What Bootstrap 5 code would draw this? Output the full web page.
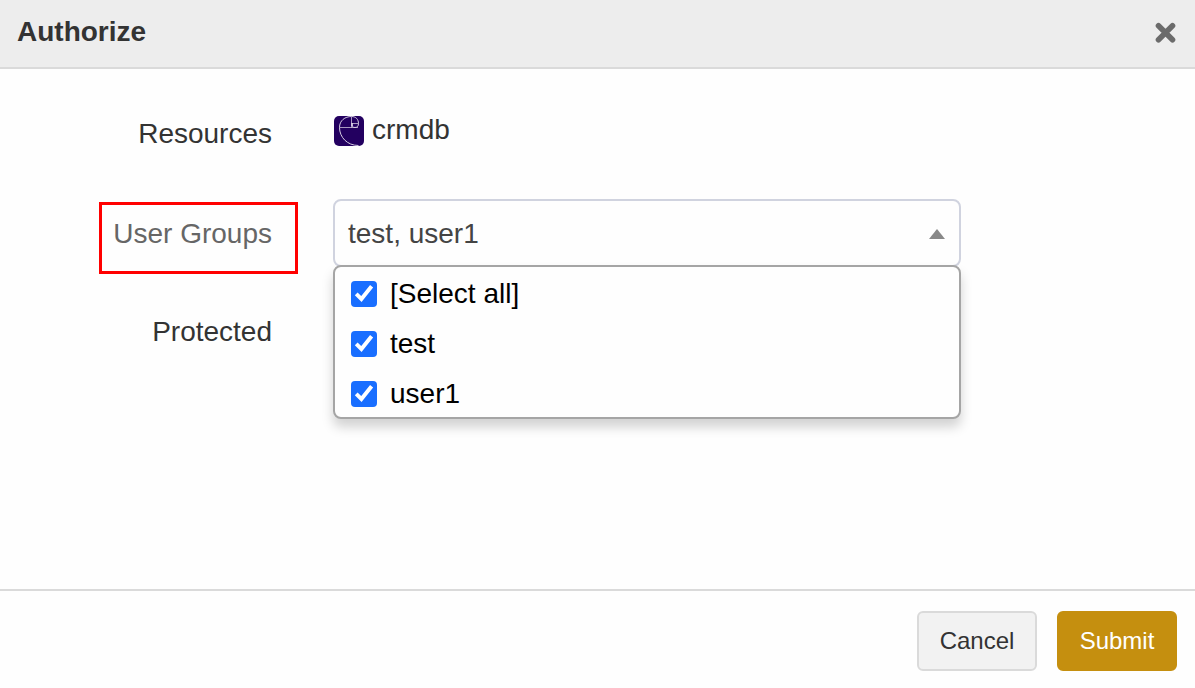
<!DOCTYPE html>
<html lang="en">
<head>
<meta charset="utf-8">
<meta name="viewport" content="width=device-width, initial-scale=1">
<title>Authorize</title>
<link href="https://cdn.jsdelivr.net/npm/bootstrap@5.3.0/dist/css/bootstrap.min.css" rel="stylesheet">
<style>
body{font-family:"Liberation Sans",Arial,sans-serif;font-size:28px;line-height:32px;color:#333;background:#fefefe;overflow:hidden}
.dialog-box{height:688px}
.dialog-box .modal-header{height:69px;background:#ededed;border-bottom:2px solid #dadada;border-radius:0;padding:0 19px 3px 17px}
.dialog-box .modal-title{font-size:28px;line-height:32px;font-weight:700}
.close-x{width:22px;height:22px;padding:0;border:0;background:none;line-height:0;margin-top:1px}
.form-area{padding-top:45px}
.field-label{width:272px;text-align:right}
.field-control{width:628px;margin-left:61px}
.row-resources{height:85px}
.resource-icon{margin:2px 8px 0 1px}
.row-groups{height:101px}
.outlined{width:199px;height:72px;margin:3px 0 0 99px;border:3px solid #f00;padding:13px 23px 0 0;color:#666;text-align:right;white-space:nowrap}
.picker{margin-left:35px}
.picker-box{height:68px;border:2px solid #d0d3df;border-radius:8px;padding:2px 14px 0 13px;color:#444;background:#fefefe}
.picker .dropdown-menu{top:66px;left:0;width:628px;height:154px;margin:0;padding:2px 0 0;border:2px solid #a5a5a5;border-radius:8px;background:#fefefe;box-shadow:0 8px 12px rgba(0,0,0,.175);font-size:28px;color:#000}
.option-row{height:50px;padding:0 16px;gap:13px;margin:0}
.option-row .form-check-input{width:26px;height:26px;margin:0;border:0;border-radius:4px;background-color:#196eff;background-size:26px;background-image:url("data:image/svg+xml,%3Csvg xmlns='http://www.w3.org/2000/svg' viewBox='0 0 26 26'%3E%3Cpath d='M5.2 12.9L10.4 18L20.6 5.3' fill='none' stroke='white' stroke-width='3.9'/%3E%3C/svg%3E")!important}
.dialog-box .modal-footer{height:99px;border-top:2px solid #dadada;border-radius:0;padding:2px 18px 0;gap:20px}
.modal-footer .btn{width:120px;height:60px;margin:0;padding:0;font-size:24px;border:2px solid #dadada;border-radius:6px;background:#f2f2f2;color:#333}
.modal-footer .btn-submit{background:#c58f0f;border-color:#c58f0f;color:#fff}
</style>
</head>
<body>
<div class="dialog-box d-flex flex-column">
  <header class="modal-header d-flex align-items-center justify-content-between">
    <h1 class="modal-title">Authorize</h1>
    <button type="button" class="close-x" aria-label="Close">
      <svg width="22" height="22" viewBox="0 0 22 22"><path d="M4.5 3.7L18.5 17.7M18.5 3.7L4.5 17.7" stroke="#6b6b6b" stroke-width="5.6" stroke-linecap="round"/></svg>
    </button>
  </header>
  <main class="form-area flex-grow-1">
    <div class="d-flex row-resources">
      <div class="field-label pt-1">Resources</div>
      <div class="field-control d-flex">
        <svg class="flex-shrink-0 resource-icon" width="30" height="30" viewBox="0 0 30 30"><rect width="30" height="30" rx="5" fill="#230060"/><g fill="none" stroke="#d5cce2" stroke-width="1"><path d="M24.5 29.5C13 29.5 5.5 21 5.5 11.5C5.5 4.5 11 .5 17.5 .5C22 .5 24.5 3.5 24.5 7.5C24.5 10.2 23 11.5 21 11.5C19 11.5 17.8 10.3 17.8 8.8"/><path d="M5.5 11.5H24M17.5 .5V11.5M17.5 7.5H24.5" stroke-opacity=".75"/><path d="M18 7V10" stroke-width="1.8"/></g></svg>
        <span>crmdb</span>
      </div>
    </div>
    <div class="d-flex row-groups">
      <div class="outlined">User Groups</div>
      <div class="picker dropdown field-control">
        <div class="picker-box d-flex align-items-center justify-content-between">
          <span>test, user1</span>
          <svg width="16" height="10" viewBox="0 0 16 10"><path d="M8 0L16 10H0Z" fill="#888"/></svg>
        </div>
        <div class="dropdown-menu show">
          <label class="option-row d-flex align-items-center"><input class="form-check-input" type="checkbox" checked><span>[Select all]</span></label>
          <label class="option-row d-flex align-items-center"><input class="form-check-input" type="checkbox" checked><span>test</span></label>
          <label class="option-row d-flex align-items-center"><input class="form-check-input" type="checkbox" checked><span>user1</span></label>
        </div>
      </div>
    </div>
    <div class="field-label pt-3">Protected</div>
  </main>
  <footer class="modal-footer d-flex flex-nowrap align-items-center justify-content-end">
    <button type="button" class="btn">Cancel</button>
    <button type="button" class="btn btn-submit">Submit</button>
  </footer>
</div>
<script src="https://cdn.jsdelivr.net/npm/bootstrap@5.3.0/dist/js/bootstrap.bundle.min.js"></script>
</body>
</html>
